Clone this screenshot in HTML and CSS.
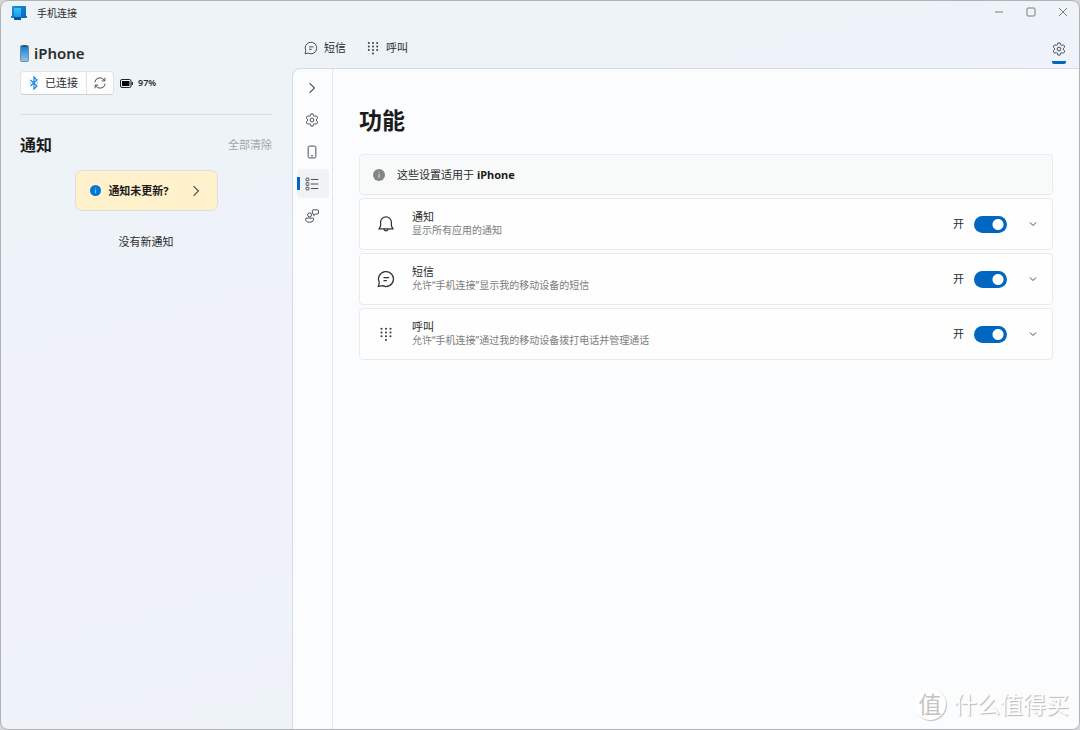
FILE: index.html
```html
<!DOCTYPE html>
<html lang="zh-CN">
<head>
<meta charset="utf-8">
<title>手机连接</title>
<link rel="stylesheet" href="styles.css">
</head>
<body>
<svg class="defs" aria-hidden="true">
  <symbol id="gear" viewBox="0 0 20 20"><path d="M8.200 1.500 Q10 1 11.800 1.500 L12.300 4 Q13 4.200 13.900 4.800 L16.200 4 Q17.700 5.400 18.200 7.200 L16.400 8.800 Q16.600 10 16.400 11.200 L18.200 12.800 Q17.700 14.600 16.200 16 L13.900 15.200 Q13 15.800 12.300 16 L11.800 18.500 Q10 19 8.200 18.500 L7.700 16 Q7 15.800 6.100 15.200 L3.800 16 Q2.300 14.600 1.800 12.800 L3.600 11.200 Q3.400 10 3.600 8.800 L1.800 7.200 Q2.300 5.400 3.800 4 L6.100 4.800 Q7 4.200 7.700 4 Z"/><circle cx="10" cy="10" r="2.700"/></symbol>
  <symbol id="chat" viewBox="0 0 20 20"><path d="M1.500 18.300 L2.600 13.800 A8.300 8.300 0 1 1 6.200 17.400 Z M7.200 8.400 H13.500 M7.200 11.800 H11"/></symbol>
  <symbol id="keypad" viewBox="0 0 20 20"><g class="dots"><circle cx="4" cy="3" r="1.400"/><circle cx="10" cy="3" r="1.400"/><circle cx="16" cy="3" r="1.400"/><circle cx="4" cy="8" r="1.400"/><circle cx="10" cy="8" r="1.400"/><circle cx="16" cy="8" r="1.400"/><circle cx="4" cy="13" r="1.400"/><circle cx="10" cy="13" r="1.400"/><circle cx="16" cy="13" r="1.400"/><circle cx="10" cy="18" r="1.400"/></g></symbol>
  <symbol id="right" viewBox="0 0 20 20"><path d="M6 2 L14 10 L6 18"/></symbol>
  <symbol id="down" viewBox="0 0 20 20"><path d="M4 7 L10 13 L16 7"/></symbol>
</svg>
<div class="window">
  <header class="titlebar">
    <svg class="app-logo" viewBox="0 0 16 16" aria-hidden="true">
      <defs><linearGradient id="screen" x1="0" y1="0" x2="1" y2="1"><stop offset="0" stop-color="#1b93dc"/><stop offset="1" stop-color="#0b62b8"/></linearGradient><linearGradient id="handset" x1="0" y1="0" x2="0" y2="1"><stop offset="0" stop-color="#35c5f5"/><stop offset="1" stop-color="#1689dc"/></linearGradient></defs>
      <path d="M2 1 H14 Q15 1 15 2 V11 H16 V12 Q16 13 15 13 H1 Q0 13 0 12 V11 H1 V2 Q1 1 2 1Z" fill="url(#screen)"/>
      <path d="M3 3 H10 V15 H4 Q3 15 3 14Z" fill="url(#handset)"/>
      <path d="M3 12 H10 V15 H4 Q3 15 3 14Z" fill="#0753a0"/>
    </svg>
    <h1 class="app-name">手机连接</h1>
    <div class="window-buttons">
      <button aria-label="最小化"><svg class="icon-s" viewBox="0 0 10 10"><path d="M1 5 H9"/></svg></button>
      <button aria-label="最大化"><svg class="icon-s" viewBox="0 0 10 10"><rect x="1" y="1" width="8" height="8" rx="1"/></svg></button>
      <button aria-label="关闭"><svg class="icon-s" viewBox="0 0 10 10"><path d="M1 1 L9 9 M9 1 L1 9"/></svg></button>
    </div>
  </header>
  <div class="body">
    <aside class="sidebar">
      <div class="device">
        <svg class="device-icon" viewBox="0 0 9 17" aria-hidden="true"><defs><linearGradient id="phone" x1="0" y1="0" x2="0" y2="1"><stop offset="0" stop-color="#0d78d0"/><stop offset="1" stop-color="#8cc6f2"/></linearGradient></defs><rect x=".5" y=".5" width="8" height="16" rx="1" fill="url(#phone)" stroke="#7d8a95"/><path d="M2.500 1 H6.500" stroke="#222"/></svg>
        <h2 class="device-name">iPhone</h2>
      </div>
      <div class="status">
        <div class="status-group">
          <button class="connected"><svg class="bluetooth" viewBox="0 0 10 14" aria-hidden="true"><path d="M1.500 4 L8 10 L5 13 V1 L8 4 L1.500 10"/><path d="M1 7 H1.800 M8.200 7 H9"/></svg>已连接</button>
          <button class="refresh" aria-label="刷新"><svg class="icon" viewBox="0 0 20 20"><path d="M2.500 9 A7.500 7.500 0 0 1 16.500 6.500 M17 2.500 V7 H12.500 M17.500 11 A7.500 7.500 0 0 1 3.500 13.500 M3 17.500 V13 H7.500"/></svg></button>
        </div>
        <svg class="battery" viewBox="0 0 13 9" aria-hidden="true"><rect x=".5" y=".5" width="10.500" height="8" rx="1.500" fill="none" stroke="#222"/><rect x="2" y="2" width="7.500" height="5" fill="#000"/><path d="M12.200 3 V6" stroke="#222" stroke-width="1.400"/></svg>
        <span class="percent">97%</span>
      </div>
      <section class="notifications">
        <div class="notifications-head">
          <h2>通知</h2>
          <button class="clear" disabled>全部清除</button>
        </div>
        <button class="notice"><svg class="notice-icon" viewBox="0 0 12 12" aria-hidden="true"><circle cx="6" cy="6" r="6" fill="#0078d4"/><path d="M6 3 V4 M6 5 V9" stroke="#8fc5ef"/></svg><span>通知未更新?</span><svg class="icon-m" viewBox="0 0 20 20" aria-hidden="true"><use href="#right"/></svg></button>
        <p class="empty">没有新通知</p>
      </section>
    </aside>
    <div class="main">
      <nav class="tabs">
        <a href="#messages"><svg class="icon"><use href="#chat"/></svg>短信</a>
        <a href="#calls"><svg class="icon"><use href="#keypad"/></svg>呼叫</a>
        <a class="settings-tab" href="#settings" aria-label="设置"><svg class="icon"><use href="#gear"/></svg></a>
      </nav>
      <div class="panel">
        <nav class="rail">
          <button aria-label="展开"><svg class="icon-m"><use href="#right"/></svg></button>
          <button aria-label="常规"><svg class="icon"><use href="#gear"/></svg></button>
          <button aria-label="我的设备"><svg class="icon" viewBox="0 0 20 20"><rect x="4.500" y="1.500" width="11" height="17" rx="2"/><path d="M8.500 15.500 H11.500"/></svg></button>
          <button class="active" aria-label="功能"><svg class="icon" viewBox="0 0 20 20"><rect x="1.500" y="1.500" width="4" height="4" rx="1"/><rect x="1.500" y="8" width="4" height="4" rx="1"/><rect x="1.500" y="14.500" width="4" height="4" rx="1"/><path d="M8.500 3.500 H19 M8.500 10 H19 M8.500 16.500 H19"/></svg></button>
          <button aria-label="反馈"><svg class="icon" viewBox="0 0 20 20"><circle cx="6.500" cy="8.500" r="2.800"/><path d="M2.500 13 H11 Q12.500 13 12.500 14.500 Q12 19 6.800 19 Q1 19 1 14.500 Q1 13 2.500 13Z M11.500 1.200 H18 Q19.200 1.200 19.200 2.500 V6 Q19.200 7.200 18 7.200 H15 L12.500 9.500 V7.200 H11.500 Q10.500 7.200 10.500 6 V2.500 Q10.500 1.200 11.500 1.200Z"/></svg></button>
        </nav>
        <main class="content">
          <h2 class="page-title">功能</h2>
          <div class="cards">
            <div class="info"><svg class="info-icon" viewBox="0 0 12 12" aria-hidden="true"><circle cx="6" cy="6" r="6" fill="#858585"/><path d="M6 3 V4 M6 5 V9" stroke="#ddd"/></svg><p>这些设置适用于 <strong>iPhone</strong></p></div>
            <div class="card">
              <svg class="icon-l" viewBox="0 0 20 20" aria-hidden="true"><path d="M10 2 A6 6 0 0 0 4 8 V12 L2.300 15.500 H17.700 L16 12 V8 A6 6 0 0 0 10 2Z M7.800 16 A2.300 2.300 0 0 0 12.200 16"/></svg>
              <label class="text" for="t1"><span class="name">通知</span><span class="desc">显示所有应用的通知</span></label>
              <span class="state">开</span><input class="toggle" id="t1" type="checkbox" role="switch" checked>
              <button class="expand" aria-label="展开通知"><svg class="icon-s"><use href="#down"/></svg></button>
            </div>
            <div class="card">
              <svg class="icon-l" aria-hidden="true"><use href="#chat"/></svg>
              <label class="text" for="t2"><span class="name">短信</span><span class="desc">允许“手机连接”显示我的移动设备的短信</span></label>
              <span class="state">开</span><input class="toggle" id="t2" type="checkbox" role="switch" checked>
              <button class="expand" aria-label="展开短信"><svg class="icon-s"><use href="#down"/></svg></button>
            </div>
            <div class="card">
              <svg class="icon-l" viewBox="-2 -2 24 24" aria-hidden="true"><use href="#keypad" width="20" height="20"/></svg>
              <label class="text" for="t3"><span class="name">呼叫</span><span class="desc">允许“手机连接”通过我的移动设备拨打电话并管理通话</span></label>
              <span class="state">开</span><input class="toggle" id="t3" type="checkbox" role="switch" checked>
              <button class="expand" aria-label="展开呼叫"><svg class="icon-s"><use href="#down"/></svg></button>
            </div>
          </div>
        </main>
      </div>
    </div>
  </div>
  <div class="watermark"><span class="seal">值</span><span>什么值得买</span></div>
</div>
</body>
</html>
```
FILE: styles.css
```css
* { box-sizing: border-box; }
body {
  margin: 0;
  background: #d4d6d8;
  color: #2b2b2b;
  font: 11px/16px "Noto Sans", "Noto Sans CJK SC", sans-serif;
}
h1, h2, p { margin: 0; }
button {
  display: flex;
  align-items: center;
  justify-content: center;
  padding: 0;
  border: 0;
  background: none;
  color: inherit;
  font: inherit;
}
a { color: inherit; text-decoration: none; }
svg { flex: none; }
.defs { position: absolute; width: 0; height: 0; }
.icon, .icon-s, .icon-m, .icon-l { fill: none; stroke: #4a4a4a; stroke-width: 1.4; }
.icon { width: 14px; height: 14px; }
.icon-m { width: 12px; height: 12px; stroke-width: 1.8; }
.icon-l { width: 18px; height: 18px; stroke: #333; }
.icon-s { width: 10px; height: 10px; stroke-width: 1; }
.dots { fill: #3c3c3c; stroke: none; }

.window {
  position: relative;
  display: flex;
  flex-direction: column;
  min-height: 100vh;
  border: 1px solid #b0b2b4;
  border-radius: 8px;
  background: linear-gradient(165deg, #eef3f7 0%, #eef3f8 22%, #eff2fb 38%, #eff2fb 60%, #eef3f7 82%, #eef2fa 100%);
  overflow: hidden;
}
.titlebar { display: flex; align-items: center; height: 24px; padding-left: 10px; }
.app-logo { width: 16px; height: 16px; }
.app-name { margin-left: 10px; font-size: 10px; font-weight: 400; }
.window-buttons { display: flex; margin-left: auto; }
.window-buttons button { width: 32px; height: 24px; padding: 0 1px 2px 0; }
.window-buttons .icon-s { stroke: #7c7c7c; }
.body { display: flex; flex: 1; }

.sidebar { width: 291px; padding: 17px 20px 0 19px; }
.device { display: flex; align-items: center; gap: 5px; height: 22px; }
.device-icon { width: 9px; height: 17px; }
.device-name { font-size: 15px; line-height: 22px; font-weight: 600; }
.status { display: flex; align-items: center; margin-top: 7px; }
.status-group {
  display: flex;
  height: 24px;
  border: 1px solid #e0e4e9;
  border-bottom-color: #ccd1d7;
  border-radius: 4px;
  background: #fdfdfe;
}
.connected { gap: 6px; width: 66px; border-right: 1px solid #e0e4e9; }
.refresh { width: 26px; }
.bluetooth { width: 10px; height: 14px; fill: none; stroke: #1a86dc; stroke-width: 1.2; }
.battery { width: 13px; height: 9px; margin: 0 5px 0 6px; }
.percent { font-size: 9px; font-weight: 600; }
.notifications { margin-top: 19px; padding-top: 18px; border-top: 1px solid #dadfe5; }
.notifications-head { display: flex; align-items: center; justify-content: space-between; }
.notifications-head h2 { color: #1b1b1b; font-size: 16px; line-height: 24px; }
.clear { color: #a2a5a9; }
.notice {
  width: 143px;
  height: 41px;
  margin: 13px auto 0;
  border: 1px solid #dcdde0;
  border-radius: 7px;
  background: #fff1cc;
  color: #1b1b1b;
  font-weight: 700;
}
.notice-icon { width: 11px; height: 11px; margin-right: 7px; }
.notice .icon-m { margin-left: 21px; }
.empty { margin-top: 23px; text-align: center; }

.main { display: flex; flex: 1; flex-direction: column; min-width: 0; }
.tabs { display: flex; align-items: center; gap: 20px; height: 43px; padding: 3px 13px 0 12px; }
.tabs a { display: flex; align-items: center; gap: 6px; height: 32px; }
.tabs .settings-tab {
  justify-content: center;
  height: 28px;
  margin: 4px 0 0 auto;
  border-bottom: 3px solid #0067c0;
  border-radius: 2px;
}
.panel {
  display: flex;
  flex: 1;
  border: 1px solid #d3dbe3;
  border-width: 1px 0 0 1px;
  border-radius: 8px 0 0 0;
  background: #fbfcfe;
}
.rail {
  display: flex;
  flex-direction: column;
  align-items: center;
  gap: 3px;
  width: 40px;
  padding-top: 4px;
  border-right: 1px solid #e3e7ec;
}
.rail button { width: 32px; height: 29px; padding-right: 1px; border-radius: 4px; }
.rail .active {
  background: linear-gradient(#0067c0, #0067c0) left center / 3px 13px no-repeat, #f1f2f4;
}
.content { flex: 1; min-width: 0; padding: 34px 26px 0; }
.page-title { color: #1b1b1b; font-size: 23px; line-height: 34px; }
.cards { display: grid; gap: 3px; margin-top: 17px; }
.info, .card {
  display: flex;
  align-items: center;
  border: 1px solid #e8eaed;
  border-radius: 4px;
  background: #fefefe;
}
.info { gap: 12px; height: 41px; padding: 0 13px; background: #f8faf9; }
.info-icon { width: 12px; height: 12px; }
.info strong { color: #1b1b1b; }
.card { height: 52px; padding: 0 10px 0 17px; }
.text { display: flex; flex: 1; flex-direction: column; margin: 0 0 2px 17px; }
.name { line-height: 14px; }
.desc { color: #7c7c7c; font-size: 10px; line-height: 13px; }
.toggle {
  appearance: none;
  width: 33px;
  height: 17px;
  margin: 0 17px 0 10px;
  border-radius: 9px;
  background: #a0a0a0 radial-gradient(circle at 9px 50%, #fff 5px, transparent 6px);
}
.toggle:checked { background: #0067c0 radial-gradient(circle at 24px 50%, #fff 5px, transparent 6px); }
.expand { width: 18px; height: 24px; }
.expand .icon-s { stroke-width: 2; }

.watermark {
  position: absolute;
  right: 10px;
  bottom: 8px;
  display: flex;
  align-items: center;
  gap: 8px;
  color: #fff;
  font-size: 23px;
  line-height: 34px;
  text-shadow: 1px 1px 1px #b4b4b4;
}
.seal {
  width: 32px;
  height: 32px;
  border-radius: 50%;
  background: #fff;
  box-shadow: 1px 1px 1px #c4c4c4;
  color: #c4c4c4;
  text-align: center;
  line-height: 32px;
  text-shadow: none;
}
```
